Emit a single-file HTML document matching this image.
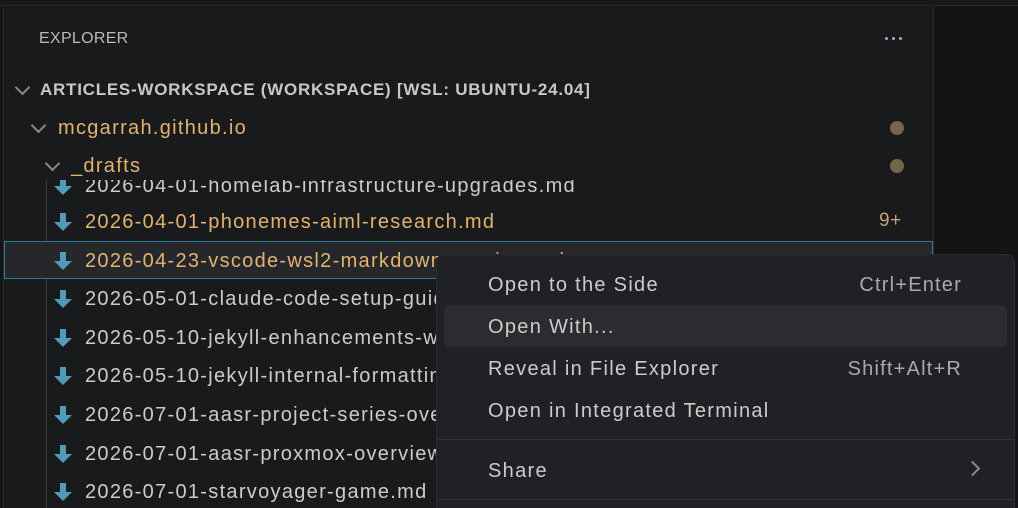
<!DOCTYPE html>
<html><head><meta charset="utf-8"><style>
*{margin:0;padding:0;box-sizing:border-box}
html,body{width:1018px;height:508px;overflow:hidden}
body{background:#131415;font-family:"Liberation Sans",sans-serif;position:relative}
.top{position:absolute;left:0;top:0;width:1018px;height:6px;background:#17181a;border-bottom:1px solid #2a2b2d}
.side{position:absolute;left:3px;top:7px;width:931px;height:501px;background:#191a1c;border-left:1px solid #2a2b2d;border-right:1px solid #2a2b2d;overflow:hidden}
.t{position:absolute;white-space:nowrap;font-size:20px;line-height:24px;letter-spacing:1.3px}
.chev{position:absolute;width:11px;height:11px;border-right:2px solid #8a8a8a;border-bottom:2px solid #8a8a8a;transform:rotate(45deg)}
.dot{position:absolute;width:14px;height:14px;border-radius:50%;background:#75664a}
.ico{position:absolute;width:18px;height:18px}
.menu{position:absolute;left:436px;top:254px;width:579px;height:254px;background:#202124;border:1px solid #2c2d30;border-bottom:none;border-radius:8px 8px 0 0;overflow:hidden}
.mi{position:absolute;left:51px;font-size:20px;color:#cccccc;line-height:24px;white-space:nowrap;letter-spacing:1.3px}
.sc{position:absolute;right:52px;font-size:20px;color:#aaaaaa;line-height:24px;letter-spacing:1.2px}
.sep{position:absolute;left:0;right:0;height:1px;background:#333437}
</style></head><body>
<div class="top"></div>
<div class="side">
 <div id="rows"></div>
 <div style="position:absolute;left:0;top:0;width:929px;height:173px;background:#191a1c"></div>
 <div class="t" style="left:35px;top:20px;font-size:16px;color:#bbbbbb;letter-spacing:0.3px">EXPLORER</div>
 <div style="position:absolute;left:881px;top:30px;width:3px;height:3px;border-radius:50%;background:#aab"></div>
 <div style="position:absolute;left:888px;top:30px;width:3px;height:3px;border-radius:50%;background:#aab"></div>
 <div style="position:absolute;left:895px;top:30px;width:3px;height:3px;border-radius:50%;background:#aab"></div>
 <div class="chev" style="left:13px;top:75px"></div>
 <div class="t" style="left:36px;top:71px;font-size:17px;font-weight:bold;color:#c8c8c8;letter-spacing:0.75px">ARTICLES-WORKSPACE (WORKSPACE) [WSL: UBUNTU-24.04]</div>
 <div class="chev" style="left:29px;top:113px"></div>
 <div class="t" style="left:54px;top:109px;color:#e2b36f">mcgarrah.github.io</div>
 <div class="dot" style="left:886px;top:114px"></div>
 <div class="chev" style="left:43px;top:151px"></div>
 <div class="t" style="left:67px;top:147px;color:#e2b36f">_drafts</div>
 <div class="dot" style="left:886px;top:152px"></div>
 <div class="t" style="left:875px;top:202px;color:#c9a270;font-size:19px;letter-spacing:0.5px">9+</div>
</div>
<div class="menu">
 <div style="position:absolute;left:7px;top:50px;width:563px;height:42px;background:#2b2c2f;border-radius:6px"></div>
 <div class="mi" style="top:18px">Open to the Side</div><div class="sc" style="top:18px">Ctrl+Enter</div>
 <div class="mi" style="top:60px">Open With...</div>
 <div class="mi" style="top:102px">Reveal in File Explorer</div><div class="sc" style="top:102px">Shift+Alt+R</div>
 <div class="mi" style="top:144px">Open in Integrated Terminal</div>
 <div class="sep" style="top:184px"></div>
 <div class="mi" style="top:204px">Share</div>
 <div style="position:absolute;left:530px;top:208px;width:11px;height:11px;border-right:2px solid #8a8a8a;border-bottom:2px solid #8a8a8a;transform:rotate(-45deg)"></div>
 <div class="sep" style="top:244px"></div>
</div>
<script>
var rows=[["2026-04-01-homelab-infrastructure-upgrades.md",186,"#cccccc"],["2026-04-01-phonemes-aiml-research.md",222,"#e2b36f"],["2026-04-23-vscode-wsl2-markdown-preview.md",261,"#e2b36f"],["2026-05-01-claude-code-setup-guide.md",299,"#cccccc"],["2026-05-10-jekyll-enhancements-wsl.md",338,"#cccccc"],["2026-05-10-jekyll-internal-formatting.md",376,"#cccccc"],["2026-07-01-aasr-project-series-overview.md",415,"#cccccc"],["2026-07-01-aasr-proxmox-overview.md",454,"#cccccc"],["2026-07-01-starvoyager-game.md",492,"#cccccc"]];
var h='<div style="position:absolute;left:42px;top:169px;width:1px;height:340px;background:#3c3d40"></div>'+
'<div style="position:absolute;left:0;top:234px;width:929px;height:38px;background:#26272a;border:1px solid #2c7b9c"></div>';
rows.forEach(function(r){var top=r[1]-7;
h+='<div style="position:absolute;left:0;top:'+(top-12)+'px;width:930px;height:24px;">'+
'<svg class="ico" style="left:50px;top:3px" viewBox="0 0 18 18"><path d="M6 0h6v9h6l-9 9-9-9h6z" fill="#519aba"/></svg>'+
'<div class="t" style="left:81px;top:0;color:'+r[2]+'">'+r[0]+'</div></div>';});
document.getElementById("rows").innerHTML=h;
</script>
</body></html>
